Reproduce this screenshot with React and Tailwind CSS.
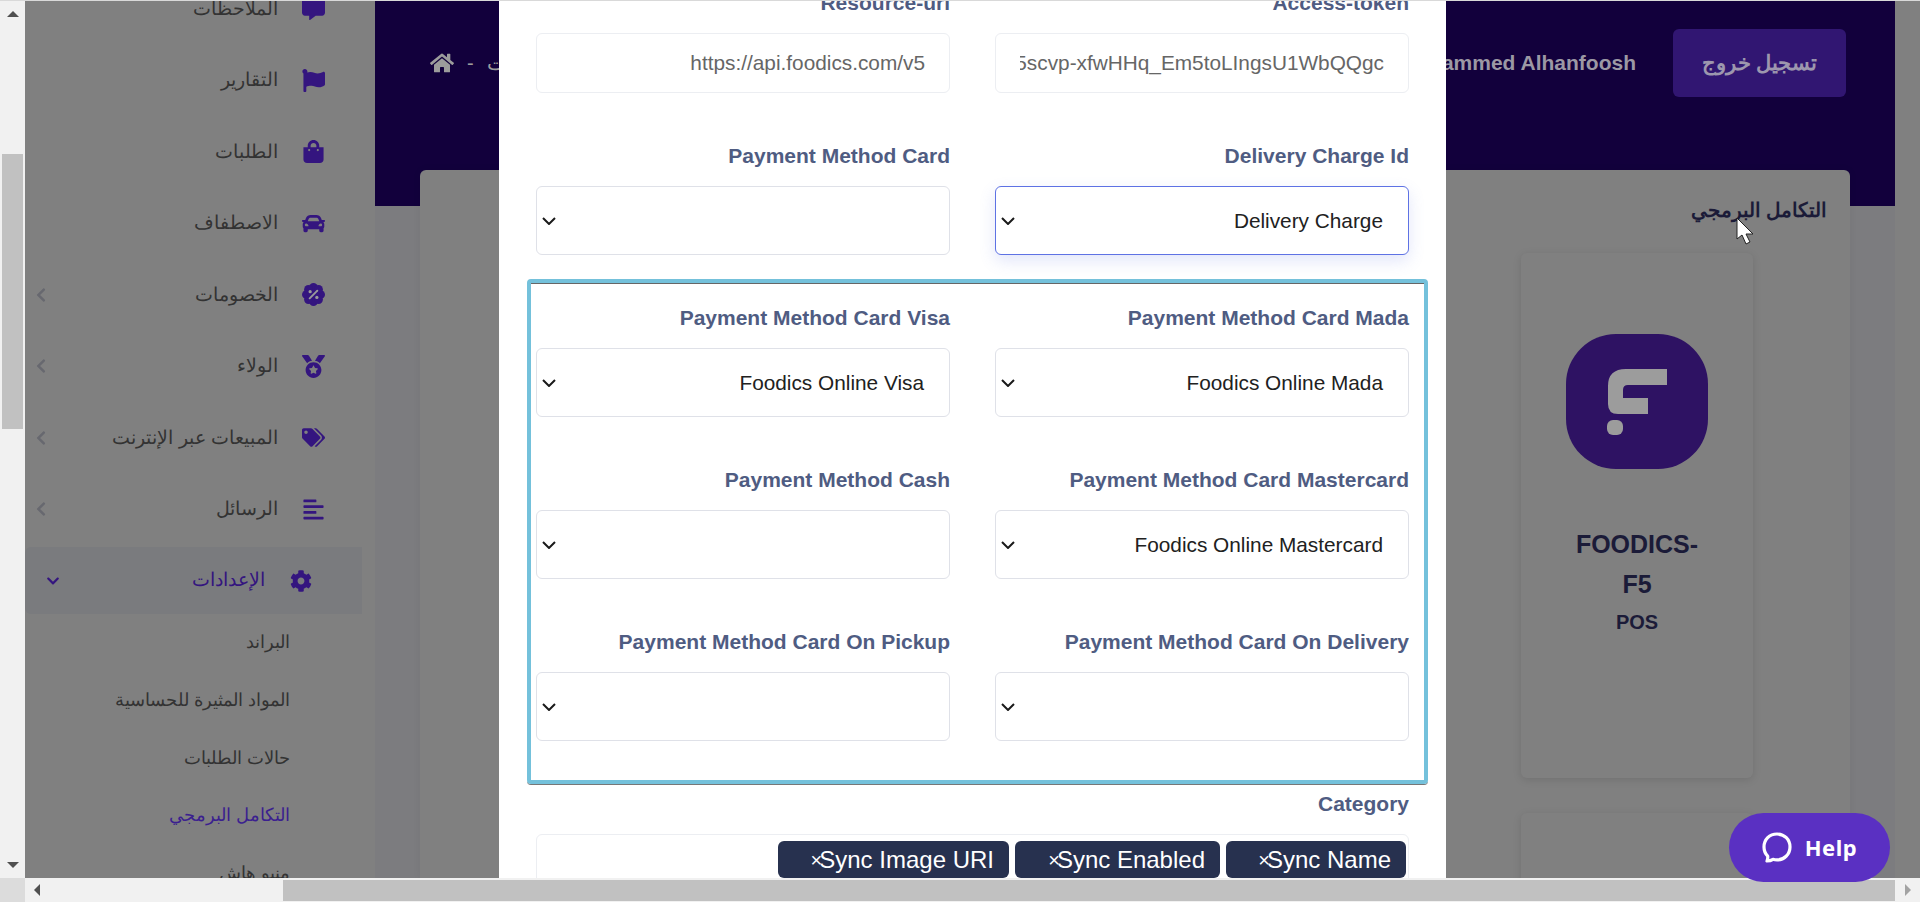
import React from 'react';
import { FaCommentAlt, FaFlag, FaShoppingBag, FaCar, FaMedal, FaTags, FaAlignLeft, FaCog, FaHome, FaChevronLeft, FaChevronDown } from 'react-icons/fa';

const PercentBadge = () => (
  <svg width="23" height="23" viewBox="0 0 24 24" className="text-[#34157f]">
    <g fill="currentColor">
      <circle cx="12" cy="12" r="9" />
      <circle cx="12" cy="4.5" r="4.5" />
      <circle cx="12" cy="19.5" r="4.5" />
      <circle cx="4.5" cy="12" r="4.5" />
      <circle cx="19.5" cy="12" r="4.5" />
      <circle cx="6.7" cy="6.7" r="4.5" />
      <circle cx="17.3" cy="6.7" r="4.5" />
      <circle cx="6.7" cy="17.3" r="4.5" />
      <circle cx="17.3" cy="17.3" r="4.5" />
    </g>
    <path d="M16 8 8 16" stroke="#9a9a9a" strokeWidth="2" strokeLinecap="round" />
    <circle cx="8.5" cy="9" r="1.7" fill="#9a9a9a" />
    <circle cx="15.5" cy="15" r="1.7" fill="#9a9a9a" />
  </svg>
);

const navItems = [
  { label: 'الملاحظات', icon: <FaCommentAlt size={23} /> },
  { label: 'التقارير', icon: <FaFlag size={23} /> },
  { label: 'الطلبات', icon: <FaShoppingBag size={23} /> },
  { label: 'الاصطفاف', icon: <FaCar size={23} /> },
  { label: 'الخصومات', icon: <PercentBadge />, arrow: true },
  { label: 'الولاء', icon: <FaMedal size={23} />, arrow: true },
  { label: 'المبيعات عبر الإنترنت', icon: <FaTags size={31} />, arrow: true },
  { label: 'الرسائل', icon: <FaAlignLeft size={23} />, arrow: true },
];

const subItems = ['البراند', 'المواد المثيرة للحساسية', 'حالات الطلبات', 'التكامل البرمجي', 'منيو هاش'];

const Chevron = () => (
  <svg width="14" height="8" viewBox="0 0 14 8" fill="none" stroke="#1a1a1a" strokeWidth="2" className="shrink-0">
    <path d="M1 1l6 6 6-6" />
  </svg>
);

const Label = ({ children }) => (
  <div className="h-6 mb-[18px] text-right text-[21px] leading-6 font-bold text-[#4f5c82]">{children}</div>
);

const Select = ({ label, value, focused }) => (
  <div>
    <Label>{label}</Label>
    <div
      className={`h-[69px] flex items-center justify-between pl-[5px] pr-[25px] rounded-md bg-white border ${
        focused ? 'border-[#5e72e4] shadow-[0_6px_16px_rgba(94,114,228,0.18)]' : 'border-[#dfe1e8]'
      }`}
    >
      <Chevron />
      <span className="text-[20.8px] text-[#212121]">{value}</span>
    </div>
  </div>
);

const TextField = ({ label, children }) => (
  <div>
    <Label>{label}</Label>
    <div className="h-[60px] flex items-center px-6 rounded-md bg-white border border-[#eceef2]">
      <div className="w-full flex justify-end overflow-hidden whitespace-nowrap text-[20.8px] text-[#666666]">{children}</div>
    </div>
  </div>
);

const Tag = ({ children, width }) => (
  <span className={`${width} h-[37px] flex items-center justify-end pr-[15px] rounded-md bg-[#27314f] text-white text-[24px] whitespace-nowrap`}>
    <span className="text-[20px] font-light -mr-[3px]">×</span>
    {children}
  </span>
);

const Sidebar = () => (
  <aside dir="rtl" className="w-[350px] shrink-0 -mt-[28px] bg-[#808080] text-[#333333] text-[19px]">
    {navItems.map((item) => (
      <div key={item.label} className="h-[71.5px] flex items-center justify-between pr-[50px] pl-[8px]">
        <div className="flex items-center gap-6">
          <span className="w-[23px] flex justify-end text-[#34157f]">{item.icon}</span>
          <span>{item.label}</span>
        </div>
        {item.arrow && <FaChevronLeft size={16} className="text-[#67686f]" />}
      </div>
    ))}
    <div className="mt-[2px] mr-[13px] h-[67px] flex items-center justify-between pr-[50px] pl-[21px] rounded-l-md bg-[#7a7b7e] text-[#34157f]">
      <div className="flex items-center gap-[25px]">
        <FaCog size={22} />
        <span>الإعدادات</span>
      </div>
      <FaChevronDown size={14} />
    </div>
    {subItems.map((label) => (
      <div key={label} className={`h-[57.7px] flex items-center pr-[85px] text-[18px] ${label === 'التكامل البرمجي' ? 'text-[#3b1f8f]' : ''}`}>
        {label}
      </div>
    ))}
  </aside>
);

const FoodicsLogo = () => (
  <svg width="142" height="135" viewBox="0 0 142 135">
    <rect width="142" height="135" rx="50" fill="#2e1263" />
    <path d="M101 35V51H62Q57 51 57 56V64H82V80H52Q42 80 42 70V52Q42 35 60 35Z" fill="#9c9c9c" />
    <rect x="41" y="86" width="16" height="15" rx="6" fill="#9c9c9c" />
  </svg>
);

const MainContent = () => (
  <main className="flex-1 min-w-0 bg-[#808080]">
    <div className="w-[1520px] h-full flex flex-col bg-[#7c7c7f]">
      <header className="h-[205px] shrink-0 flex items-start justify-between pt-[28px] pl-[55px] pr-[49px] bg-[#12003c]">
        <div className="h-[68px] flex items-center gap-[13px] text-[#9c9c9c] text-[20px]">
          <FaHome size={24} />
          <span>-</span>
          <span dir="rtl">التكاملات</span>
        </div>
        <div className="flex items-center gap-[37px]">
          <span className="text-[21px] font-bold text-[#9c98a4]">Mohammed Alhanfoosh</span>
          <button className="w-[173px] h-[68px] rounded-md bg-[#311672] text-[#9d97ae] text-[21px] font-bold">تسجيل خروج</button>
        </div>
      </header>
      <section dir="rtl" className="ml-[45px] w-[1430px] flex-1 -mt-[36px] rounded-t-md bg-[#808080] pt-[28px] pr-[23px] overflow-hidden shadow-[0_0_8px_rgba(0,0,0,0.06)]">
        <h2 className="h-6 leading-6 text-[19.5px] font-bold text-[#1b1b38]">التكامل البرمجي</h2>
        <div className="mr-[74px] mt-[31px] w-[232px]">
          <div dir="ltr" className="h-[525px] flex flex-col items-center pt-[81px] rounded-md bg-[#808080] shadow-[0_2px_8px_rgba(0,0,0,0.12)]">
            <FoodicsLogo />
            <div className="mt-[55px] w-[142px] text-center text-[25px] leading-10 font-bold text-[#1b1b38]">FOODICS-F5</div>
            <div className="mt-[2px] text-[20px] leading-8 font-bold text-[#1b1b38]">POS</div>
          </div>
          <div className="h-[200px] mt-[35px] rounded-md bg-[#808080] shadow-[0_2px_8px_rgba(0,0,0,0.12)]" />
        </div>
      </section>
    </div>
  </main>
);

const Modal = () => (
  <div className="absolute left-[499px] top-0 bottom-0 w-[947px] overflow-hidden bg-white px-[37px]">
    <div className="-mt-[10px] grid grid-cols-2 gap-x-[45px] gap-y-[51px]">
      <TextField label="Resource-url">https://api.foodics.com/v5</TextField>
      <TextField label="Access-token">G5scvp-xfwHHq_Em5toLIngsU1WbQQgc</TextField>
      <Select label="Payment Method Card" value="" />
      <Select label="Delivery Charge Id" value="Delivery Charge" focused />
    </div>
    <div className="mt-6 -ml-[9px] -mr-[19px] h-[505px] pt-[23px] pl-[5px] pr-[15px] rounded border-4 border-[#74c1db] shadow-[inset_0_1px_0_#666666,0_1px_0_#777777]">
      <div className="grid grid-cols-2 gap-x-[45px] gap-y-[51px]">
        <Select label="Payment Method Card Visa" value="Foodics Online Visa" />
        <Select label="Payment Method Card Mada" value="Foodics Online Mada" />
        <Select label="Payment Method Cash" value="" />
        <Select label="Payment Method Card Mastercard" value="Foodics Online Mastercard" />
        <Select label="Payment Method Card On Pickup" value="" />
        <Select label="Payment Method Card On Delivery" value="" />
      </div>
    </div>
    <div className="mt-[8px]">
      <Label>Category</Label>
      <div className="h-[80px] flex justify-end gap-[6px] pt-[6px] pr-[2px] rounded-md border border-[#eceef2]">
        <Tag width="w-[231px]">Sync Image URI</Tag>
        <Tag width="w-[205px]">Sync Enabled</Tag>
        <Tag width="w-[180px]">Sync Name</Tag>
      </div>
    </div>
  </div>
);

const Arrow = ({ className }) => <span className={`w-0 h-0 ${className}`} />;

const App = () => {
  return (
    <div className="relative w-screen h-screen overflow-hidden flex flex-col bg-[#f1f1f1] font-['Liberation_Sans',sans-serif]">
      <div className="h-px shrink-0 bg-[#d9d9d9]" />
      <div className="relative flex-1 min-h-0 flex overflow-hidden">
        <div className="w-[25px] shrink-0 flex flex-col items-center bg-[#f1f1f1]">
          <Arrow className="mt-[10px] border-x-[6px] border-x-transparent border-b-[6px] border-b-[#505050]" />
          <div className="mt-[137px] w-[21px] h-[275px] bg-[#c1c1c1]" />
          <div className="flex-1" />
          <Arrow className="mb-[10px] border-x-[6px] border-x-transparent border-t-[6px] border-t-[#505050]" />
        </div>
        <div className="flex-1 min-w-0 flex">
          <Sidebar />
          <MainContent />
        </div>
        <Modal />
      </div>
      <div className="h-6 shrink-0 flex items-center bg-[#f1f1f1]">
        <div className="w-[25px] h-full bg-[#dcdcdc]" />
        <Arrow className="ml-[9px] border-y-[6px] border-y-transparent border-r-[6px] border-r-[#505050]" />
        <div className="ml-[243px] w-[1612px] h-[21px] bg-[#c1c1c1]" />
        <Arrow className="ml-[10px] border-y-[6px] border-y-transparent border-l-[6px] border-l-[#a3a3a3]" />
      </div>

      <button className="absolute left-[1729px] top-[813px] w-[161px] h-[69px] flex items-center justify-center gap-[13px] rounded-full bg-[#5a30c2] text-white text-[22px] font-bold tracking-[0.5px] font-['Noto_Sans',sans-serif]">
        <svg width="30" height="31" viewBox="0 0 30 31" fill="none" stroke="white" strokeWidth="3.2">
          <path d="M5 29c2 0 4.500-.7 6-1.700 1.200.4 2.500.6 4 .6 7 0 13-5.400 13-12.900C28 7.500 22.500 2 15 2S2 7.500 2 15c0 3.600 1.300 6.800 3.700 9.200.3 2-.2 3.600-.7 4.800z" strokeLinejoin="round" />
        </svg>
        Help
      </button>

      <svg className="absolute left-[1736px] top-[217px]" width="20" height="30" viewBox="0 0 20 30">
        <path d="M1 1v21l5-4 4 9 4-2-4-8h7z" fill="white" stroke="#222222" strokeWidth="1" />
      </svg>
    </div>
  );
};

export default App;
